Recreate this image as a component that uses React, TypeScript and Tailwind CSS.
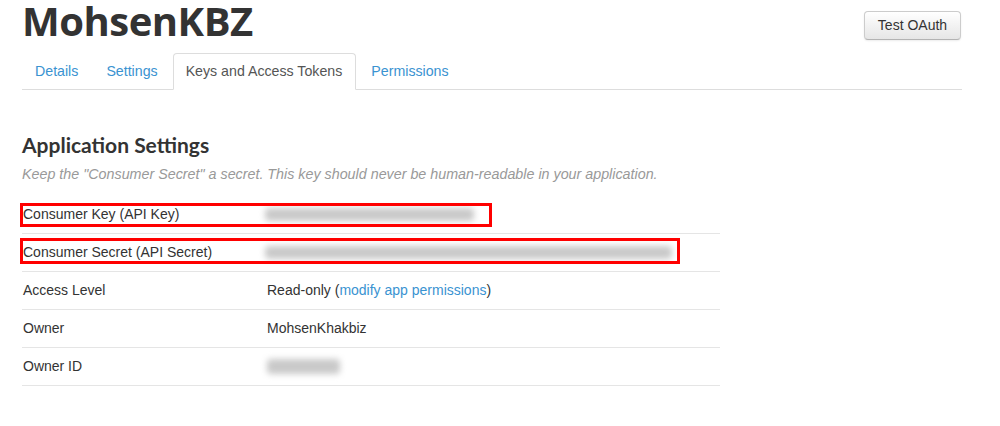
import React from "react";

const Blur = ({ w, h = 13 }: { w: number; h?: number }) => (
  <div className="flex items-center" style={{ width: w }}>
    <div
      className="bg-[#c9c9c9] blur-[3px] rounded w-full"
      style={{ height: h }}
    />
  </div>
);

export default function App() {
  const tabs = ["Details", "Settings", "Keys and Access Tokens", "Permissions"];
  return (
    <div className="w-[1000px] h-[426px] bg-white text-[#333] font-['Liberation_Sans',Arial,sans-serif] text-[14px]">
      <div className="ml-[22px] w-[940px]">
        <div className="flex justify-between items-start h-[53px]">
          <h1 className="font-['Open_Sans',sans-serif] font-bold text-[40px] leading-[42px] tracking-[-0.5px] text-[#333]">
            MohsenKBZ
          </h1>
          <button className="mt-[11px] mr-[1px] h-[29px] w-[97px] rounded-[4px] border border-[#ccc] border-b-[#b3b3b3] bg-gradient-to-b from-white to-[#e6e6e6] text-[14px] text-[#333] shadow-[0_1px_2px_rgba(0,0,0,0.08)]">
            Test OAuth
          </button>
        </div>
        <ul className="flex border-b border-[#ddd] h-[37px] text-[14.2px]">
          {tabs.map((t, i) => (
            <li key={t} className="mr-[2px] -mb-[1px]">
              <a
                className={
                  i === 2
                    ? "flex items-center h-[37px] pl-[12px] pr-[13px] border border-[#ddd] border-b-white rounded-t-[4px] bg-white text-[#555]"
                    : "flex items-center h-[37px] px-[12px] border border-transparent text-[#3a93d1]"
                }
              >
                {t}
              </a>
            </li>
          ))}
        </ul>
        <h2 className="mt-[42px] font-['Lato',sans-serif] font-bold text-[21px] leading-[26px] text-[#333]">
          Application Settings
        </h2>
        <p className="mt-[6px] italic text-[#999] text-[14.3px] leading-[20px]">
          Keep the "Consumer Secret" a secret. This key should never be human-readable in your application.
        </p>
        <div className="mt-[12px] w-[698px]">
          <div className="relative flex items-center h-[38px] border-b border-[#e5e5e5]">
            <div className="w-[243px] pl-[1px]">Consumer Key (API Key)</div>
            <div>
              <Blur w={209} />
            </div>
            <div className="absolute left-[-2px] top-[7px] w-[472px] h-[24px] border-[3px] border-[#ff0000]" />
          </div>
          <div className="relative flex items-center h-[38px] border-b border-[#e5e5e5]">
            <div className="w-[243px] pl-[1px]">Consumer Secret (API Secret)</div>
            <div>
              <Blur w={407} />
            </div>
            <div className="absolute left-[-2px] top-[4px] w-[660px] h-[26px] border-[3px] border-[#ff0000]" />
          </div>
          <div className="flex items-center h-[38px] border-b border-[#e5e5e5]">
            <div className="w-[245px] pl-[1px]">Access Level</div>
            <div>
              Read-only (<span className="text-[#3a93d1]">modify app permissions</span>)
            </div>
          </div>
          <div className="flex items-center h-[38px] border-b border-[#e5e5e5]">
            <div className="w-[245px] pl-[1px]">Owner</div>
            <div>MohsenKhakbiz</div>
          </div>
          <div className="flex items-center h-[38px] border-b border-[#e5e5e5]">
            <div className="w-[245px] pl-[1px]">Owner ID</div>
            <div>
              <Blur w={73} h={15} />
            </div>
          </div>
        </div>
      </div>
    </div>
  );
}
